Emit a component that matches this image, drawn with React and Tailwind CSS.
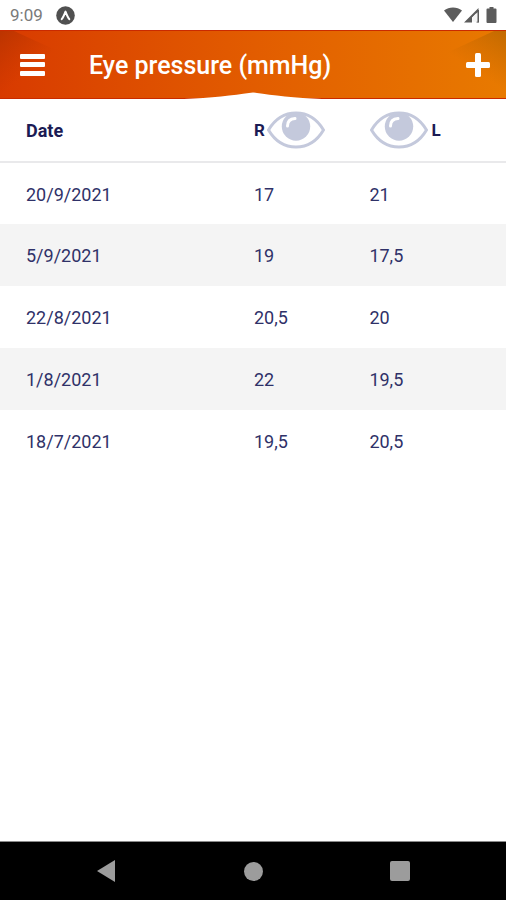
const readings = [
  { date: '20/9/2021', right: '17', left: '21' },
  { date: '5/9/2021', right: '19', left: '17,5' },
  { date: '22/8/2021', right: '20,5', left: '20' },
  { date: '1/8/2021', right: '22', left: '19,5' },
  { date: '18/7/2021', right: '19,5', left: '20,5' },
];

function StatusBar() {
  return (
    <div className="flex h-[30px] items-center justify-between pl-[10px] pr-2 text-[#7a7a7a]">
      <div className="flex items-center gap-[13px]">
        <span className="text-[17px] leading-5">9:09</span>
        <svg className="size-[19px]" viewBox="0 0 19 19" aria-hidden="true">
          <circle cx="9.5" cy="9.5" r="9.3" fill="#505050" />
          <path d="M5.7 13.2C7.2 11.4 8.3 8.6 9.5 5.6c1.200 3 2.300 5.800 3.800 7.600M9 6.500h1" fill="none" stroke="#fff" strokeWidth="2" strokeLinecap="round" strokeLinejoin="round" />
        </svg>
      </div>
      <svg className="h-4 w-[54px]" viewBox="0 0 54 16" fill="#5c5c5c" aria-hidden="true">
        <path d="M0 3.600C5 -.6 13 -.6 18 3.600L9 15z" />
        <path d="M20 15.500 34.500 1v14.500h-2V6L28 10.500v5z" />
        <path d="M28.500 14.800V10.500L33.800 5v9.800z" fill="#f4f4f4" />
        <path d="M33.600 3h1.400v12.500h-1.400z" />
        <path d="M45.500 0h4v1.500h2q1 0 1 1V15q0 1-1 1h-8q-1 0-1-1V2.500q0-1 1-1h2z" />
      </svg>
    </div>
  );
}

function Header() {
  return (
    <header className="relative flex h-[69px] items-center border-y border-[#c92a00] bg-linear-to-r from-[#d83a00] via-[#e25c00] to-[#e87a00] pl-5 pr-4 text-white">
      <svg className="absolute inset-x-0 top-0 h-[68px] w-full" viewBox="0 0 506 68" preserveAspectRatio="none" aria-hidden="true">
        <defs>
          <linearGradient id="shadeLeft" gradientUnits="userSpaceOnUse" x1="0" y1="0" x2="32" y2="38">
            <stop offset="0" stopColor="#a83000" stopOpacity=".6" />
            <stop offset="1" stopColor="#b83400" stopOpacity="0" />
          </linearGradient>
          <linearGradient id="shadeRight" gradientUnits="userSpaceOnUse" x1="506" y1="0" x2="478" y2="42">
            <stop offset="0" stopColor="#a86000" stopOpacity=".6" />
            <stop offset="1" stopColor="#b86000" stopOpacity="0" />
          </linearGradient>
        </defs>
        <path d="M0 0h14L62 22V68H0z" fill="url(#shadeLeft)" />
        <path d="M440 25 494 0h12v68h-66z" fill="url(#shadeRight)" />
        <path d="M184 68C210 67 235 64 249 62Q253 61 257 62C271 64 296 67 322 68z" fill="#fff" />
      </svg>
      <button type="button" aria-label="Open menu" className="relative">
        <svg className="h-6 w-[25px]" viewBox="0 0 25 24" fill="#fff" aria-hidden="true">
          <rect y="1" width="25" height="5" rx="1" />
          <rect y="9" width="25" height="5" rx="1" />
          <rect y="18" width="25" height="5" rx="1" />
        </svg>
      </button>
      <h1 className="relative ml-11 grow pt-0.5 text-[25px] leading-8 font-medium">Eye pressure (mmHg)</h1>
      <button type="button" aria-label="Add reading" className="relative">
        <svg className="size-6" viewBox="0 0 24 24" fill="#fff" aria-hidden="true">
          <rect x="9" width="6" height="24" rx="1.500" />
          <rect y="9" width="24" height="6" rx="1.500" />
        </svg>
      </button>
    </header>
  );
}

function Eye() {
  return (
    <svg className="h-[38px] w-[58px] shrink-0" viewBox="0 0 58 38" aria-hidden="true">
      <path d="M1.500 19C8 8 18 2 29 2s21 6 27.500 17C50 30 40 36 29 36S8 30 1.500 19z" fill="none" stroke="#c4c9dc" strokeWidth="3" strokeLinejoin="round" />
      <circle cx="29" cy="15.500" r="14.200" fill="#c4c9dc" />
      <path d="M20.500 15Q20.500 8 28 7.500" fill="none" stroke="#fff" strokeWidth="3" strokeLinecap="round" />
    </svg>
  );
}

function ReadingsTable() {
  return (
    <table className="w-full table-fixed border-collapse text-left text-lg text-[#2f3168]">
      <colgroup>
        <col className="w-1/2" />
        <col className="w-[23%]" />
        <col />
      </colgroup>
      <thead className="text-[#1b1b54]">
        <tr className="h-[63px] border-b-2 border-[#e9e9eb]">
          <th scope="col" className="pl-[26px] pt-0.5 font-bold">Date</th>
          <th scope="col" className="pl-px text-[17px] font-bold">
            <div className="flex items-center gap-0.5">R<Eye /></div>
          </th>
          <th scope="col" className="pl-px text-[17px] font-bold">
            <div className="flex items-center gap-[3px]"><Eye />L</div>
          </th>
        </tr>
      </thead>
      <tbody>
        {readings.map((r) => (
          <tr key={r.date} className="h-[62px] even:bg-[#f4f4f4]">
            <td className="pl-[26px] pt-0.5">{r.date}</td>
            <td className="pl-px pt-0.5">{r.right}</td>
            <td className="pt-0.5">{r.left}</td>
          </tr>
        ))}
      </tbody>
    </table>
  );
}

function NavigationBar() {
  return (
    <nav className="flex h-[59px] items-center justify-center gap-[127px] border-t border-[#8a8a8a] bg-black">
      <button type="button" aria-label="Back">
        <svg className="h-[22px] w-5" viewBox="0 0 20 22" aria-hidden="true"><path d="M0 11 18 0v22z" fill="#9c9c9c" /></svg>
      </button>
      <button type="button" aria-label="Home" className="size-[19px] rounded-full bg-[#9c9c9c]" />
      <button type="button" aria-label="Recent apps" className="size-5 rounded-xs bg-[#9c9c9c]" />
    </nav>
  );
}

export default function App() {
  return (
    <div className="flex min-h-screen flex-col bg-white font-[Roboto,sans-serif]">
      <StatusBar />
      <Header />
      <main className="grow">
        <ReadingsTable />
      </main>
      <NavigationBar />
    </div>
  );
}
